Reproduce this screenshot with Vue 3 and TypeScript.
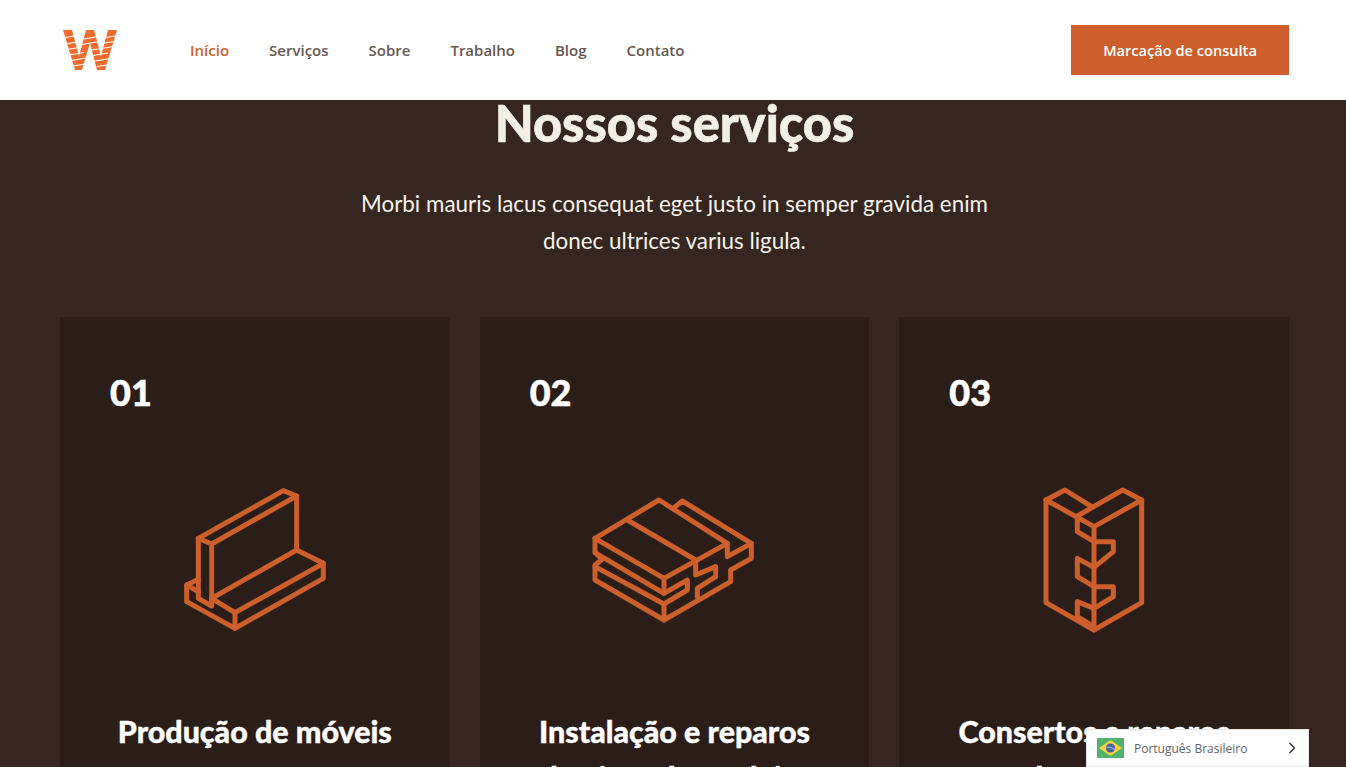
<script setup lang="ts">
const links = ["Início", "Serviços", "Sobre", "Trabalho", "Blog", "Contato"];

const services = [
  { num: "01", title: "Produção de móveis" },
  { num: "02", title: "Instalação e reparos de pisos de madeira" },
  { num: "03", title: "Consertos e reparos de móveis" },
];

// icon strokes, in units of 1/3 px
const icons = [
  {
    box: "0 0 510 510",
    w: 170,
    d: [
      "M85 205L340 62L380 78V240",
      "M85 205L125 222L380 78",
      "M85 205V385L125 408V222",
      "M125 385L380 240L460 280V325L195 475L50 395V345L85 328",
      "M460 280L195 428L125 385",
      "M195 428V475",
      "M50 345L85 365",
    ],
  },
  {
    box: "0 -45 570 510",
    w: 190,
    d: [
      "M48 160L240 45L445 175L255 280Z",
      "M145 105L350 225",
      "M285 68L310 48L517 175L445 215V175",
      "M48 160V203L255 325L325 285V315L255 357L48 245",
      "M48 203L70 223L48 240V285L255 405L455 290V255L517 220V175",
      "M255 280V325",
      "M255 357V405",
      "M350 225V270L410 245V275L355 310V335",
    ],
  },
  {
    box: "-3 -30 450 510",
    w: 150,
    d: [
      "M78 60L135 30L215 80",
      "M78 60V368L222 450L365 368V60L308 30L172 108",
      "M78 60L222 140L365 60",
      "M222 140V450",
      "M172 108V155L222 185H280V215L222 262L172 235V290L222 320H280V350L222 385L172 365V410L222 440",
    ],
  },
];
</script>

<template>
  <div class="page">
    <header class="top">
      <svg class="logo" width="56" height="42" viewBox="0 0 56 42">
        <path fill="#ee6c2e" d="M1 1L13 41H20L28 14L35 41H43L55 1H46L39 27L32 1H24L17 27L10 1Z" />
        <g stroke="#fff" stroke-width="1.2">
          <path d="M0 9L12 7M3 15L18 12.5M5 20.5L20 18M7 26L22 23.5M9 31.5L24 29M11 37L24 35" />
          <path d="M22 10L36 7.5M20 15.5L38 12.5M29 21L42 19M31 26.5L46 24M33 32L48 29.5M35 37.5L48 35.5M44 8.5L56 6.5M42 14L56 12M40 19.5L54 17" />
        </g>
      </svg>
      <nav class="menu">
        <a v-for="(l, i) in links" :key="l" :class="{ active: i === 0 }">{{ l }}</a>
      </nav>
      <button class="cta">Marcação de consulta</button>
    </header>

    <main class="services">
      <h2>Nossos serviços</h2>
      <p class="lead">Morbi mauris lacus consequat eget justo in semper gravida enim donec ultrices varius ligula.</p>
      <div class="cards">
        <article v-for="(s, i) in services" :key="s.num" class="card">
          <div class="num">{{ s.num }}</div>
          <div class="icon-wrap">
            <svg
              :width="icons[i].w"
              height="170"
              :viewBox="icons[i].box"
              fill="none"
              stroke="#cc5f2b"
              stroke-width="15"
              stroke-linejoin="round"
              stroke-linecap="round"
            >
              <path v-for="p in icons[i].d" :key="p" :d="p" />
            </svg>
          </div>
          <h3>{{ s.title }}</h3>
        </article>
      </div>
    </main>

    <div class="lang">
      <svg width="27" height="20" viewBox="0 0 27 20">
        <rect width="27" height="20" fill="#4fb26e" />
        <path d="M13.5 2L25 10L13.5 18L2 10Z" fill="#f3d23c" />
        <circle cx="13.5" cy="10" r="4.6" fill="#4a62a8" />
        <path d="M9.2 9.2Q13.5 8.4 17.8 11.4" stroke="#dfe6f0" stroke-width=".7" fill="none" />
      </svg>
      <span>Português Brasileiro</span>
      <svg class="chev" width="8" height="12" viewBox="0 0 8 12" fill="none" stroke="#222" stroke-width="1.3">
        <path d="M1.5 1L6.5 6L1.5 11" />
      </svg>
    </div>
  </div>
</template>

<style>
html, body {
  margin: 0;
  overflow: hidden;
}
</style>

<style scoped>
.page {
  height: 767px;
  overflow: hidden;
  position: relative;
  background: #35261f;
  font-family: Lato, "Liberation Sans", sans-serif;
}
.top {
  height: 100px;
  box-sizing: border-box;
  background: #fff;
  display: flex;
  align-items: center;
  padding: 0 57px 0 62px;
}
.logo {
  margin-right: 72px;
}
.menu {
  display: flex;
  gap: 40px;
  flex: 1;
}
.menu a {
  font: 600 15px "Open Sans", "Liberation Sans", sans-serif;
  color: #655850;
}
.menu a.active {
  color: #cc5f2b;
}
.cta {
  width: 218px;
  height: 50px;
  border: 0;
  background: #cc5f2b;
  color: #fff;
  font: 600 14.6px "Open Sans", "Liberation Sans", sans-serif;
}
.services {
  padding: 1px 57px 0 60px;
  text-align: center;
}
h2 {
  margin: 0;
  color: #f3efe4;
  font-size: 50.5px;
  line-height: 44px;
  font-weight: 900;
  -webkit-text-stroke: 0.6px #f3efe4;
}
.lead {
  width: 660px;
  margin: 40px auto 0;
  color: #f6f1e8;
  font-size: 22.4px;
  line-height: 37px;
  font-weight: 400;
}
.cards {
  display: grid;
  grid-template-columns: repeat(3, 1fr);
  gap: 30px;
  margin-top: 58px;
}
.card {
  background: #2b1e19;
  padding: 50px 50px 0;
  height: 600px;
  box-sizing: border-box;
}
.num {
  text-align: left;
  color: #fff;
  font-size: 36px;
  line-height: 50px;
  font-weight: 900;
  -webkit-text-stroke: 0.5px #fff;
}
.icon-wrap {
  height: 170px;
  margin-top: 53px;
  display: flex;
  justify-content: center;
  align-items: center;
}
h3 {
  margin: 67.5px 0 0;
  color: #fff;
  font-size: 30.4px;
  line-height: 46px;
  font-weight: 900;
  -webkit-text-stroke: 0.4px #fff;
}
.lang {
  position: absolute;
  left: 1086px;
  top: 729px;
  width: 223px;
  height: 38px;
  box-sizing: border-box;
  background: #fff;
  border: 1px solid #e5e5e5;
  display: flex;
  align-items: center;
  padding: 0 12px 0 10px;
  font: 12px "Open Sans", "Liberation Sans", sans-serif;
  color: #5f6368;
}
.lang span {
  margin-left: 10px;
  flex: 1;
}
</style>
